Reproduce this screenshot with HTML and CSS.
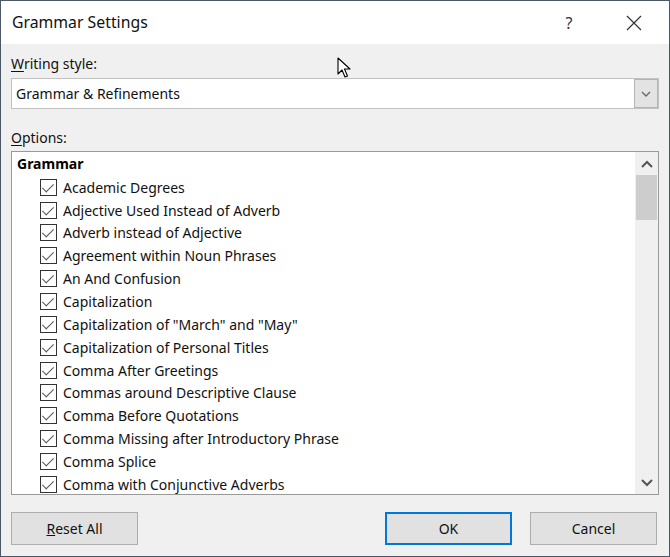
FILE: index.html
```html
<!DOCTYPE html>
<html>
<head>
<meta charset="utf-8">
<link rel="stylesheet" href="styles.css">
</head>
<body>
<div class="dialog">
  <div class="titlebar">
    <span class="title">Grammar Settings</span>
    <span class="tb-help">?</span>
    <span class="tb-close">
      <svg width="16" height="16" viewBox="0 0 16 16"><path d="M1 1 L15 15 M15 1 L1 15" stroke="#333" stroke-width="1.2" fill="none"/></svg>
    </span>
  </div>
  <div class="content">
    <div class="label label-first"><u>W</u>riting style:</div>
    <div class="combo">
      <span class="combo-text">Grammar &amp; Refinements</span>
      <span class="combo-btn">
        <svg width="10" height="6" viewBox="0 0 10 6"><path d="M1 1 L5 5 L9 1" stroke="#666" stroke-width="1.3" fill="none"/></svg>
      </span>
    </div>
    <div class="label label-opts"><u>O</u>ptions:</div>
    <div class="listbox">
      <div class="list">
        <div class="group">Grammar</div>
        <div class="item"><span class="cb"></span>Academic Degrees</div>
        <div class="item"><span class="cb"></span>Adjective Used Instead of Adverb</div>
        <div class="item"><span class="cb"></span>Adverb instead of Adjective</div>
        <div class="item"><span class="cb"></span>Agreement within Noun Phrases</div>
        <div class="item"><span class="cb"></span>An And Confusion</div>
        <div class="item"><span class="cb"></span>Capitalization</div>
        <div class="item"><span class="cb"></span>Capitalization of "March" and "May"</div>
        <div class="item"><span class="cb"></span>Capitalization of Personal Titles</div>
        <div class="item"><span class="cb"></span>Comma After Greetings</div>
        <div class="item"><span class="cb"></span>Commas around Descriptive Clause</div>
        <div class="item"><span class="cb"></span>Comma Before Quotations</div>
        <div class="item"><span class="cb"></span>Comma Missing after Introductory Phrase</div>
        <div class="item"><span class="cb"></span>Comma Splice</div>
        <div class="item"><span class="cb"></span>Comma with Conjunctive Adverbs</div>
      </div>
      <div class="scrollbar">
        <span class="sb-arrow">
          <svg width="12" height="8" viewBox="0 0 12 8"><path d="M1 7 L6 2 L11 7" stroke="#555" stroke-width="2" fill="none"/></svg>
        </span>
        <div class="sb-track"><div class="sb-thumb"></div></div>
        <span class="sb-arrow">
          <svg width="12" height="8" viewBox="0 0 12 8"><path d="M1 1 L6 6 L11 1" stroke="#555" stroke-width="2" fill="none"/></svg>
        </span>
      </div>
    </div>
    <div class="buttons">
      <button class="btn"><u>R</u>eset All</button>
      <span class="spacer"></span>
      <button class="btn btn-default">OK</button>
      <button class="btn">Cancel</button>
    </div>
  </div>
  <svg class="cursor" width="14" height="22" viewBox="0 0 14 22"><path d="M1 1 L1 17 L5 13 L8 20 L10.5 19 L7.5 12 L13 12 Z" fill="#fff" stroke="#000" stroke-width="1.1" stroke-linejoin="round"/></svg>
</div>
</body>
</html>
```
FILE: styles.css
```css
* { box-sizing: border-box; }
html, body { margin: 0; padding: 0; }
body {
  font-family: "Noto Sans", "Open Sans", sans-serif;
  color: #000;
  background: #fff;
}
.dialog {
  position: relative;
  width: 670px;
  height: 557px;
  border: 1px solid #4a5866;
  display: flex;
  flex-direction: column;
  background: #f0f0f0;
}
.titlebar {
  height: 43px;
  background: #fff;
  display: flex;
  align-items: center;
  padding-left: 11px;
  flex: none;
}
.title {
  font-size: 15.8px;
  color: #111;
  flex: 1;
  padding-bottom: 1px;
}
.tb-help {
  font-size: 16px;
  color: #333;
  width: 20px;
  margin-right: 47px;
  text-align: center;
}
.tb-close {
  width: 16px;
  height: 16px;
  margin-right: 27px;
  display: flex;
}
.content {
  flex: 1;
  padding: 0 10px;
  display: flex;
  flex-direction: column;
  font-size: 14px;
}
.label {
  height: 20px;
  line-height: 20px;
  color: #111;
}
.label u { text-decoration-thickness: 1px; text-underline-offset: 2px; }
.label-first { margin-top: 10px; margin-bottom: 4px; }
.label-opts { margin-top: 19px; margin-bottom: 3px; }
.combo {
  height: 31px;
  border: 1px solid #c2c2c2;
  background: #fff;
  display: flex;
  align-items: center;
}
.combo-text {
  flex: 1;
  padding-left: 4px;
  color: #111;
}
.combo-btn {
  width: 24px;
  height: 29px;
  background: #e3e3e3;
  border: 1px solid #b4b4b4;
  display: flex;
  align-items: center;
  justify-content: center;
}
.listbox {
  height: 344px;
  border: 1px solid #9a9a9a;
  background: #fff;
  display: flex;
}
.list {
  flex: 1;
  overflow: hidden;
  padding-top: 1px;
}
.group {
  height: 22.85px;
  line-height: 22px;
  font-weight: bold;
  padding-left: 5px;
}
.item {
  height: 22.85px;
  display: flex;
  align-items: center;
  padding-left: 28px;
  color: #111;
  white-space: nowrap;
}
.cb {
  width: 17px;
  height: 17px;
  border: 1px solid #333;
  margin-right: 6px;
  flex: none;
  position: relative;
}
.cb::after {
  content: "";
  position: absolute;
  left: 4px;
  top: 1px;
  width: 5px;
  height: 10px;
  border-right: 1.5px solid #555;
  border-bottom: 1.5px solid #555;
  transform: rotate(45deg);
}
.scrollbar {
  width: 23px;
  background: #f0f0f0;
  display: flex;
  flex-direction: column;
  flex: none;
}
.sb-arrow {
  height: 23px;
  display: flex;
  align-items: center;
  justify-content: center;
}
.sb-track { flex: 1; }
.sb-thumb {
  height: 45px;
  margin: 0 1px;
  background: #cdcdcd;
}
.buttons {
  display: flex;
  margin-top: 17px;
  padding-right: 2px;
  gap: 18px;
}
.spacer { flex: 1; }
.btn {
  width: 127px;
  height: 33px;
  background: #e1e1e1;
  border: 1px solid #adadad;
  font-family: inherit;
  font-size: 14px;
  color: #111;
  padding: 0;
}
.btn-default {
  border: 2px solid #0078d7;
}
.cursor {
  position: absolute;
  left: 336px;
  top: 56px;
}
```
